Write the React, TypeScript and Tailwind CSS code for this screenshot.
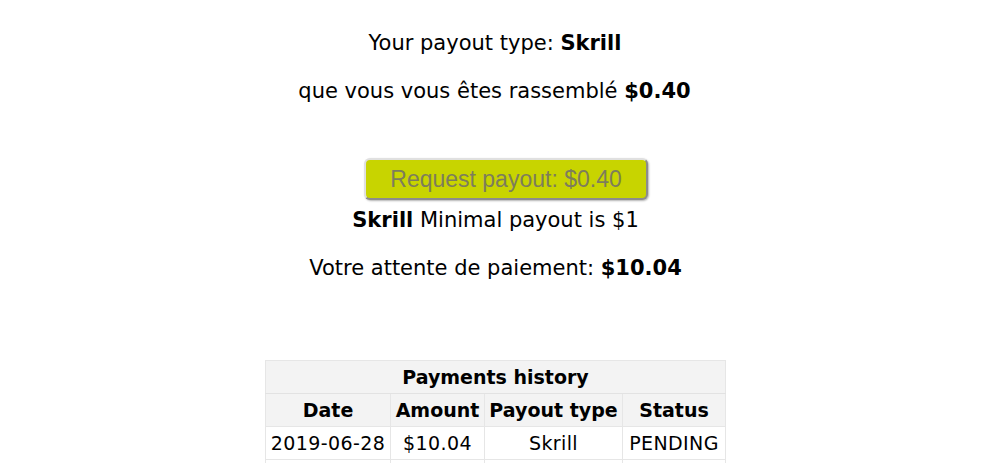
import React from "react";

export default function App() {
  const font = { fontFamily: '"DejaVu Sans", Verdana, sans-serif' };
  return (
    <div className="w-[995px] h-[463px] bg-white overflow-hidden text-black text-[21px]" style={font}>
      <div className="flex flex-col items-center">
        <p className="mt-[30px] leading-[26px] mr-[5px]">
          Your payout type: <b>Skrill</b>
        </p>
        <p className="mt-[22px] leading-[26px] mr-[6px]">
          que vous vous êtes rassemblé <b>$0.40</b>
        </p>
        <button
          className="mt-[54px] ml-[17px] w-[284px] h-[42px] rounded-[6px] bg-[#c8d400] text-[#7d7d5c] text-[23px] leading-none border-2 border-t-[#e0e0e0] border-l-[#e0e0e0] border-r-[#8c8c8c] border-b-[#8c8c8c] shadow-[1px_1px_2px_rgba(0,0,0,0.3)]"
          style={{ fontFamily: '"Liberation Sans", Arial, sans-serif' }}
        >
          Request payout: $0.40
        </button>
        <p className="mt-[7px] leading-[26px] mr-[4px]">
          <b>Skrill</b> Minimal payout is $1
        </p>
        <p className="mt-[22px] leading-[26px] mr-[4px]">
          Votre attente de paiement: <b>$10.04</b>
        </p>
        <table className="mt-[79px] mr-[4px] w-[461px] border-collapse border border-[#e6e6e6] text-[19px]">
          <thead>
            <tr className="bg-[#f3f3f3] h-[33px]">
              <th colSpan={4} className="font-bold border-b border-[#e2e2e2]">
                Payments history
              </th>
            </tr>
            <tr className="bg-[#f3f3f3] h-[33px]">
              <th className="w-[125px] font-bold border-r border-b border-[#e6e6e6]">Date</th>
              <th className="w-[94px] font-bold border-r border-b border-[#e6e6e6]">Amount</th>
              <th className="w-[138px] font-bold border-r border-b border-[#e6e6e6]">Payout type</th>
              <th className="font-bold border-b border-[#e6e6e6]">Status</th>
            </tr>
          </thead>
          <tbody className="tracking-[0.4px]">
            <tr className="h-[33px]">
              <td className="text-center border-r border-b border-[#e6e6e6]">2019-06-28</td>
              <td className="text-center border-r border-b border-[#e6e6e6]">$10.04</td>
              <td className="text-center border-r border-b border-[#e6e6e6]">Skrill</td>
              <td className="text-center border-b border-[#e6e6e6]">PENDING</td>
            </tr>
            <tr className="h-[33px]">
              <td className="border-r border-[#e6e6e6]"></td>
              <td className="border-r border-[#e6e6e6]"></td>
              <td className="border-r border-[#e6e6e6]"></td>
              <td></td>
            </tr>
          </tbody>
        </table>
      </div>
    </div>
  );
}
